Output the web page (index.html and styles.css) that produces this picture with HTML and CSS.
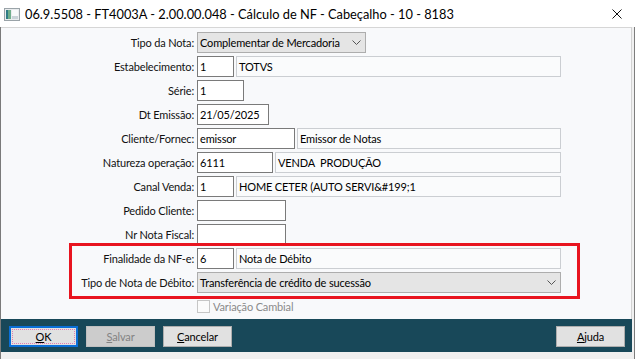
FILE: index.html
```html
<!DOCTYPE html>
<html>
<head>
<meta charset="utf-8">
<link rel="stylesheet" href="styles.css">
</head>
<body>
<div class="window">
  <div class="titlebar">
    <svg class="appicon" viewBox="0 0 16 13" width="16" height="13">
      <rect x="0.5" y="0.5" width="15" height="12" fill="#e9ecee" stroke="#9aa3a8"/>
      <rect x="2" y="2" width="5" height="9" fill="#2f7d86"/>
      <rect x="4" y="2" width="3" height="9" fill="#6fae8c"/>
      <rect x="8" y="2" width="6" height="9" fill="#f7f9fa"/>
      <rect x="8" y="8" width="6" height="3" fill="#c9d3d8"/>
    </svg>
    <span class="title">06.9.5508 - FT4003A - 2.00.00.048 - Cálculo de NF - Cabeçalho - 10 - 8183</span>
    <svg class="close" viewBox="0 0 10 10" width="10" height="10">
      <path d="M0.5 0.5 L9.5 9.5 M9.5 0.5 L0.5 9.5" stroke="#111" stroke-width="1" fill="none"/>
    </svg>
  </div>
  <div class="frame">
    <div class="client">
      <div class="form">
        <div class="label">Tipo da Nota:</div>
        <div class="field"><div class="select w-tipo"><span>Complementar de Mercadoria</span><svg class="chev" viewBox="0 0 9 5" width="9" height="5"><path d="M0.5 0.5 L4.5 4.5 L8.5 0.5" stroke="#555" fill="none"/></svg></div></div>

        <div class="label">Estabelecimento:</div>
        <div class="field"><div class="box w37">1</div><div class="desc w325">TOTVS</div></div>

        <div class="label">Série:</div>
        <div class="field"><div class="box w47">1</div></div>

        <div class="label">Dt Emissão:</div>
        <div class="field"><div class="box w72">21/05/2025</div></div>

        <div class="label">Cliente/Fornec:</div>
        <div class="field"><div class="box w98">emissor</div><div class="desc w264">Emissor de Notas</div></div>

        <div class="label">Natureza operação:</div>
        <div class="field"><div class="box w76">6111</div><div class="desc w286">VENDA&nbsp; PRODUÇÃO</div></div>

        <div class="label">Canal Venda:</div>
        <div class="field"><div class="box w37">1</div><div class="desc w325">HOME CETER (AUTO SERVI&amp;#199;1</div></div>

        <div class="label">Pedido Cliente:</div>
        <div class="field"><div class="box w89"></div></div>

        <div class="label">Nr Nota Fiscal:</div>
        <div class="field"><div class="box w89"></div></div>

        <div class="label">Finalidade da NF-e:</div>
        <div class="field"><div class="box w37">6</div><div class="desc w325">Nota de Débito</div></div>

        <div class="label">Tipo de Nota de Débito:</div>
        <div class="field"><div class="select w364"><span>Transferência de crédito de sucessão</span><svg class="chev" viewBox="0 0 9 5" width="9" height="5"><path d="M0.5 0.5 L4.5 4.5 L8.5 0.5" stroke="#555" fill="none"/></svg></div></div>

        <div class="label"></div>
        <div class="field"><div class="check"><span class="cb"></span><span>Variação Cambial</span></div></div>
      </div>
    </div>
    <div class="footer">
      <div class="btn focused"><span><u>O</u>K</span></div>
      <div class="btn disabled"><span><u>S</u>alvar</span></div>
      <div class="btn"><span><u>C</u>ancelar</span></div>
      <div class="btn help"><span><u>A</u>juda</span></div>
    </div>
    <div class="strip"></div>
  </div>
  <div class="highlight"></div>
</div>
</body>
</html>
```

FILE: styles.css
```css
* { box-sizing: border-box; }
html, body { margin: 0; padding: 0; }
body {
  width: 635px;
  height: 359px;
  overflow: hidden;
  background: #f0f0f0;
  font-family: Lato, "Noto Sans", sans-serif;
  font-size: 11px;
  letter-spacing: -0.15px;
  color: #000;
}
.window {
  position: relative;
  width: 635px;
  height: 359px;
  display: flex;
  flex-direction: column;
}
.titlebar {
  height: 27px;
  flex: none;
  background: #fff;
  display: flex;
  align-items: center;
  padding-left: 4px;
}
.appicon { flex: none; margin-right: 5px; margin-top: 1px; }
.title { flex: 1; font-size: 12.8px; letter-spacing: 0; white-space: nowrap; }
.close { flex: none; margin-right: 13px; }

.frame {
  flex: 1;
  display: flex;
  flex-direction: column;
  border-left: 1px solid #7a7a7a;
  border-right: 1px solid #7d7d7d;
  padding-right: 2px;
  background: #f0f0f0;
}
.client {
  height: 292px;
  flex: none;
  background: #f8f9fb;
  border-top: 1px solid #d6d6d6;
  border-right: 1px solid #d2d2d2;
  padding-top: 4px;
}
.form {
  display: grid;
  grid-template-columns: 193px auto;
  grid-auto-rows: 21px;
  column-gap: 3px;
  row-gap: 3px;
}
.label {
  text-align: right;
  line-height: 21px;
  white-space: nowrap;
  color: #111;
}
.field { display: flex; gap: 2px; align-items: center; }
.box, .desc, .select {
  height: 21px;
  line-height: 19px;
  padding: 0 2px;
  white-space: nowrap;
  overflow: hidden;
}
.box { background: #fff; border: 1px solid #7a7a7a; }
.desc { background: #fafbfc; border: 1px solid #cbced2; }
.select {
  background: #e5e5e5;
  border: 1px solid #adadad;
  display: flex;
  align-items: center;
  justify-content: space-between;
  padding-right: 4px;
}
.chev { flex: none; }
.w37 { width: 37px; }
.w47 { width: 47px; }
.w72 { width: 72px; }
.w76 { width: 76px; }
.w89 { width: 89px; }
.w98 { width: 98px; }
.w264 { width: 264px; }
.w286 { width: 286px; }
.w325 { width: 325px; }
.w364 { width: 364px; }
.w-tipo { width: 169px; }

.check { display: flex; align-items: center; gap: 3px; color: #8a8a8a; }
.cb {
  width: 13px;
  height: 13px;
  border: 1px solid #c6c6c6;
  background: #fbfbfb;
}

.footer {
  height: 33px;
  flex: none;
  background: #184859;
  display: flex;
  align-items: flex-start;
  gap: 8px;
  padding: 7px 7px 0 8px;
}
.btn {
  position: relative;
  width: 69px;
  height: 21px;
  background: #e1e1e1;
  border: 1px solid #adadad;
  display: flex;
  align-items: center;
  justify-content: center;
}
.btn u { text-underline-offset: 1px; }
.btn.focused { border: 2px solid #0a6fd8; }
.btn.focused::after {
  content: "";
  position: absolute;
  inset: 1px;
  border: 1px dotted #e07db0;
}
.btn.disabled { background: #cccccc; border-color: #bfbfbf; color: #838383; }
.btn.help { margin-left: auto; }
.strip { flex: 1; background: #f0f0f0; }

.highlight {
  position: absolute;
  left: 69px;
  top: 243px;
  width: 511px;
  height: 56px;
  border: 3px solid #e8141f;
}
```
